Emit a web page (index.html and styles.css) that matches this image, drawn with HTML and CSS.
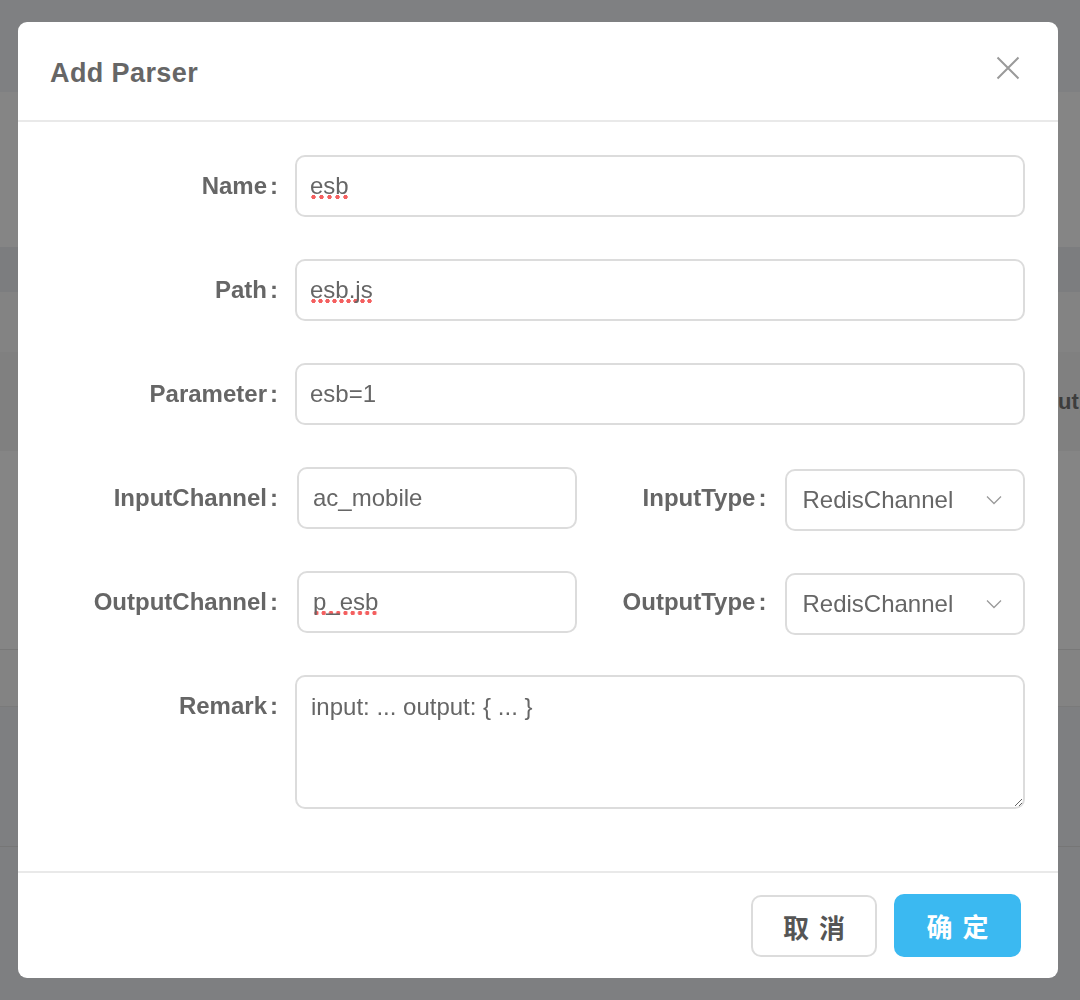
FILE: index.html
```html
<!DOCTYPE html>
<html lang="en">
<head>
<meta charset="utf-8">
<title>Add Parser</title>
<link rel="stylesheet" href="styles.css">
</head>
<body>
<div class="page">
  <div class="band band-a"></div>
  <div class="band band-b"></div>
  <div class="band band-c"></div>
  <div class="band band-d"></div>
  <div class="band band-e"><span class="peek">Output</span></div>
  <div class="band band-f"></div>
  <div class="band band-g"></div>
  <div class="band band-h"></div>
  <div class="band band-i"></div>
</div>

<div class="mask">
  <div class="modal">
    <div class="modal-header">
      <h2 class="modal-title">Add Parser</h2>
      <button class="close" aria-label="Close">
        <svg width="24" height="24" viewBox="0 0 24 24"><path d="M1.5 1.5 L22.5 22.5 M22.5 1.5 L1.5 22.5" stroke="#9a9a9a" stroke-width="2" fill="none"/></svg>
      </button>
    </div>

    <form class="modal-body">
      <div class="row">
        <label class="label">Name<span class="colon">:</span></label>
        <div class="field wide" role="textbox"><span class="typo">esb</span></div>
      </div>
      <div class="row">
        <label class="label">Path<span class="colon">:</span></label>
        <div class="field wide" role="textbox"><span class="typo">esb.js</span></div>
      </div>
      <div class="row">
        <label class="label">Parameter<span class="colon">:</span></label>
        <div class="field wide" role="textbox"><span>esb=1</span></div>
      </div>
      <div class="row">
        <label class="label">InputChannel<span class="colon">:</span></label>
        <div class="field half" role="textbox"><span>ac_mobile</span></div>
        <label class="label label-right">InputType<span class="colon">:</span></label>
        <div class="select" role="combobox">
          <span class="select-value">RedisChannel</span>
          <svg class="chev" width="16" height="10" viewBox="0 0 16 10"><path d="M1 1.5 L8 8.5 L15 1.5" stroke="#9a9a9a" stroke-width="1.3" fill="none"/></svg>
        </div>
      </div>
      <div class="row">
        <label class="label">OutputChannel<span class="colon">:</span></label>
        <div class="field half" role="textbox"><span class="typo">p_esb</span></div>
        <label class="label label-right">OutputType<span class="colon">:</span></label>
        <div class="select" role="combobox">
          <span class="select-value">RedisChannel</span>
          <svg class="chev" width="16" height="10" viewBox="0 0 16 10"><path d="M1 1.5 L8 8.5 L15 1.5" stroke="#9a9a9a" stroke-width="1.3" fill="none"/></svg>
        </div>
      </div>
      <div class="row row-top">
        <label class="label label-top">Remark<span class="colon">:</span></label>
        <textarea class="field area" spellcheck="false">input: ... output: { ... }</textarea>
      </div>
    </form>

    <div class="modal-footer">
      <button class="btn btn-cancel">取消</button>
      <button class="btn btn-ok">确定</button>
    </div>
  </div>
</div>
</body>
</html>
```

FILE: styles.css
```css
* { box-sizing: border-box; }
html, body { margin: 0; padding: 0; }
body {
  width: 1080px;
  height: 1000px;
  overflow: hidden;
  background: #7e7f81;
  font-family: "Liberation Sans", Arial, "Noto Sans CJK SC", sans-serif;
}

/* dimmed page behind the dialog */
.page { display: flex; flex-direction: column; }
.band { width: 100%; }
.band-a { height: 92px; background: #7f8082; }
.band-b { height: 155px; background: #858585; }
.band-c { height: 45px; background: #7c7d7f; }
.band-d { height: 60px; background: #838383; }
.band-e { height: 99px; background: #808080; display: flex; align-items: center; padding-left: 1041px; overflow: hidden; }
.band-f { height: 199px; background: #858585; border-bottom: 1px solid #787878; }
.band-g { height: 57px; background: #838383; border-bottom: 1px solid #7a7a7a; }
.band-h { height: 140px; background: #7e7f81; border-bottom: 1px solid #767676; }
.band-i { height: 153px; background: #7e7f81; }
.peek { font-weight: bold; font-size: 22px; color: #3d3d3d; white-space: nowrap; }

.mask {
  position: fixed;
  inset: 0;
  display: flex;
  justify-content: flex-start;
  align-items: flex-start;
  padding: 22px 0 0 18px;
}

.modal {
  width: 1040px;
  height: 956px;
  background: #fff;
  border-radius: 9px;
  display: flex;
  flex-direction: column;
}

.modal-header {
  height: 100px;
  border-bottom: 2px solid #e9e9e9;
  display: flex;
  align-items: center;
  justify-content: space-between;
  padding: 0 38px 0 32px;
}
.modal-title {
  margin: 4px 0 0;
  font-size: 27px;
  font-weight: bold;
  color: #666;
  letter-spacing: 0.4px;
}
.close {
  border: 0;
  background: none;
  padding: 0;
  width: 24px;
  height: 24px;
  margin-bottom: 6px;
  display: flex;
}

.modal-body {
  flex: 1;
  margin: 0;
  padding: 33px 33px 0 0;
  display: flex;
  flex-direction: column;
  gap: 42px;
}
.row {
  display: flex;
  align-items: center;
  height: 62px;
}
.row-top { align-items: flex-start; height: auto; }
.label {
  flex: none;
  width: 260px;
  text-align: right;
  font-size: 24px;
  font-weight: bold;
  color: #666;
  margin-right: 17px;
  white-space: nowrap;
}
.colon { margin-left: 3px; }
.label-right { width: 189px; margin-right: 19px; }
.label-top { padding-top: 17px; }

.field {
  height: 62px;
  border: 2px solid #dcdcdc;
  border-radius: 10px;
  background: #fff;
  padding: 0 13px;
  font-family: "Liberation Sans", Arial, sans-serif;
  font-size: 24px;
  color: #666;
  outline: none;
  display: flex;
  align-items: center;
}
.wide { flex: 1; }
.half { width: 281px; margin-left: 2px; padding-left: 14px; }
.typo {
  background-image: radial-gradient(circle at center, #f45f5f 1.9px, rgba(244,95,95,0) 2.5px);
  background-size: 7px 6px;
  background-repeat: space no-repeat;
  background-position: 0 100%;
}
.area {
  flex: 1;
  display: block;
  height: 134px;
  padding: 14px 14px;
  resize: both;
  line-height: 32px;
}

.select {
  position: relative;
  width: 240px;
  height: 62px;
  margin-top: 4px;
  border: 2px solid #dcdcdc;
  border-radius: 10px;
  display: flex;
  align-items: center;
  padding: 0 15px;
  font-size: 24px;
  color: #666;
}
.chev { position: absolute; right: 21px; top: 24px; }

.modal-footer {
  border-top: 2px solid #e9e9e9;
  display: flex;
  justify-content: flex-end;
  gap: 17px;
  padding: 21px 37px 21px 0;
}
.btn {
  height: 63px;
  width: 127px;
  border-radius: 10px;
  font-family: "Noto Sans CJK SC", sans-serif;
  font-size: 26px;
  font-weight: 600;
  letter-spacing: 10px;
  text-indent: 10px;
  display: flex;
  align-items: center;
  justify-content: center;
}
.btn-cancel {
  width: 126px;
  height: 62px;
  margin-top: 1px;
  background: #fff;
  border: 2px solid #dcdcdc;
  color: #555;
}
.btn-ok {
  background: #3bb9f1;
  border: 0;
  color: #fff;
}
```
